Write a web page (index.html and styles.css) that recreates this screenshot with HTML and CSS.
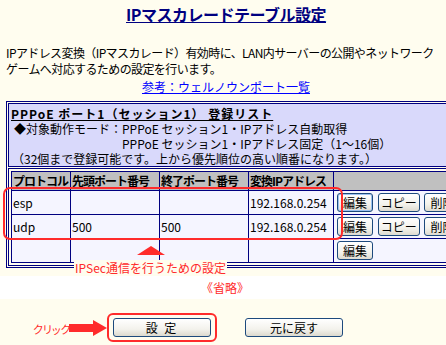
FILE: index.html
```html
<!DOCTYPE html>
<html lang="ja">

<head>
    <meta charset="utf-8">
    <meta name="viewport" content="width=device-width, initial-scale=1.0">
    <title>IPマスカレードテーブル設定</title>
    <link rel="stylesheet" href="styles.css">
</head>

<body>
    <div class="page">
        <h1>IPマスカレードテーブル設定</h1>
        <p class="lead">IPアドレス変換（IPマスカレード）有効時に、LAN内サーバーの公開やネットワーク<br>ゲームへ対応するための設定を行います。</p>
        <p class="ref"><a href="#">参考：ウェルノウンポート一覧</a></p>

        <div class="panelWrap">
            <div class="panel">
                <div class="panelHead">
                    <h2>PPPoE ポート1（セッション1） 登録リスト</h2>
                    <div class="mode">
                        <span>◆対象動作モード：</span>
                        <span>PPPoE セッション1・IPアドレス自動取得<br>PPPoE セッション1・IPアドレス固定（1～16個）</span>
                    </div>
                    <p class="note">（32個まで登録可能です。上から優先順位の高い順番になります。）</p>
                </div>
                <div class="panelBody">
                    <table class="liste">
                        <colgroup>
                            <col style="width:59px">
                            <col style="width:89px">
                            <col style="width:89px">
                            <col style="width:85px">
                            <col style="width:136px">
                        </colgroup>
                        <tr>
                            <th>プロトコル</th>
                            <th>先頭ポート番号</th>
                            <th>終了ポート番号</th>
                            <th>変換IPアドレス</th>
                            <th></th>
                        </tr>
                        <tr>
                            <td>esp</td>
                            <td></td>
                            <td></td>
                            <td>192.168.0.254</td>
                            <td class="knapper">
                                <button class="mini hot">編集</button>
                                <button class="mini kopi">コピー</button>
                                <button class="mini">削除</button>
                            </td>
                        </tr>
                        <tr>
                            <td>udp</td>
                            <td>500</td>
                            <td>500</td>
                            <td>192.168.0.254</td>
                            <td class="knapper">
                                <button class="mini">編集</button>
                                <button class="mini kopi">コピー</button>
                                <button class="mini">削除</button>
                            </td>
                        </tr>
                        <tr>
                            <td></td>
                            <td></td>
                            <td></td>
                            <td></td>
                            <td class="knapper">
                                <button class="mini">編集</button>
                            </td>
                        </tr>
                    </table>
                </div>
            </div>

            <!-- annotation -->
            <div class="ramme"></div>
            <svg class="pil-op" width="28" height="9" viewBox="0 0 28 9">
                <polygon points="0,9 14,0 28,9" fill="#ff2b2b" />
            </svg>
            <span class="forklaring">IPSec通信を行うための設定</span>
        </div>
    </div>

    <div class="omit">《省略》</div>

    <div class="actions">
        <span class="klik">クリック</span>
        <svg class="pil" width="38" height="16" viewBox="0 0 38 16">
            <polygon points="0,4 24,4 24,0 38,8 24,16 24,12 0,12" fill="#ff2b2b" />
        </svg>
        <span class="valgt"><button class="knap saet">設 定</button></span>
        <button class="knap">元に戻す</button>
    </div>
</body>

</html>
```

FILE: styles.css
```css
* {
    box-sizing: border-box;
}

html,
body {
    margin: 0;
    overflow: hidden;
    background: #fffdef;
    font-family: "Noto Sans CJK JP", "Liberation Sans", sans-serif;
    font-size: 12px;
    color: #000;
}

.page {
    width: 446px;
    padding: 4px 0 8px 6px;
}

h1 {
    margin: 0;
    text-align: center;
    font-size: 16px;
    line-height: 20px;
    color: #000080;
    text-decoration: underline;
    letter-spacing: -0.5px;
}

.lead {
    margin: 21px 0 0;
    line-height: 16px;
    white-space: nowrap;
    letter-spacing: -0.6px;
}

.ref {
    margin: 2px 0 0;
    line-height: 16px;
    text-align: center;
}

.ref a {
    color: #0000ff;
}

.panelWrap {
    position: relative;
    margin-top: 6px;
    width: 480px;
}

.panel {
    border: 1px solid #000080;
    padding: 1px;
}

.panelHead {
    border: 1px solid #000080;
    background: #d9d9fb;
    padding: 2px 2px 0;
    line-height: 15px;
}

h2 {
    margin: 0;
    font-size: 12px;
    line-height: 15px;
    color: #000;
    text-decoration: underline;
    letter-spacing: 1px;
}

.mode {
    display: flex;
    padding-left: 3px;
    white-space: nowrap;
}

.note {
    margin: 0;
    padding-left: 1px;
}

.panelBody {
    margin-top: 1px;
    border: 1px solid #000080;
    padding: 2px;
}

.liste {
    border-collapse: collapse;
    table-layout: fixed;
    border: 1px solid #000080;
    width: 458px;
}

.liste th,
.liste td {
    border: 1px solid #000080;
    padding: 0 0 0 1px;
    white-space: nowrap;
    overflow: hidden;
    text-align: left;
}

.liste th {
    background: #c0c0c0;
    height: 19px;
    line-height: 14px;
    font-size: 12px;
    letter-spacing: -1px;
}

.liste td {
    background: #f5f5ff;
    height: 24px;
    line-height: 14px;
}

.knapper {
    padding-left: 3px !important;
}

.mini {
    height: 19px;
    width: 36px;
    padding: 0;
    margin-right: 2px;
    border: 1px solid #1d4a7d;
    border-radius: 3px;
    background: linear-gradient(#ffffff, #f3f2ec 60%, #dedbd0);
    font-family: "Noto Sans CJK JP", sans-serif;
    font-size: 12px;
    line-height: 16px;
    vertical-align: middle;
}

.kopi {
    width: 42px;
}

.hot {
    box-shadow: inset 0 0 0 1px #9cc0f0;
}

.ramme {
    position: absolute;
    left: -3px;
    top: 86px;
    width: 340px;
    height: 53px;
    border: 2px solid #ff2b2b;
    border-radius: 7px;
}

.pil-op {
    position: absolute;
    left: 131px;
    top: 145px;
}

.forklaring {
    position: absolute;
    left: 68px;
    top: 159px;
    padding: 0 1px;
    background: #fffdef;
    color: #ff2b2b;
    line-height: 15px;
}

.omit {
    background: #fff;
    height: 23px;
    line-height: 23px;
    text-align: center;
    color: #ff2b2b;
    padding-left: 4px;
}

.actions {
    display: flex;
    align-items: center;
    padding: 14px 0 0 33px;
}

.klik {
    flex: none;
    width: 36px;
    color: #ff2b2b;
    font-size: 11px;
    font-feature-settings: "palt";
    white-space: nowrap;
    padding-top: 2px;
}

.pil {
    display: block;
    flex: none;
}

.valgt {
    display: block;
    border: 2px solid #ff2b2b;
    border-radius: 6px;
    padding: 3px 4px;
}

.knap {
    display: block;
    width: 98px;
    height: 19px;
    padding: 0;
    border: 1px solid #1d4a7d;
    border-radius: 3px;
    background: linear-gradient(#ffffff, #f3f2ec 60%, #dcd9ce);
    font-family: "Noto Sans CJK JP", sans-serif;
    font-size: 12px;
    line-height: 16px;
    margin-left: 28px;
}

.saet {
    margin-left: 0;
    letter-spacing: 2px;
}
```
